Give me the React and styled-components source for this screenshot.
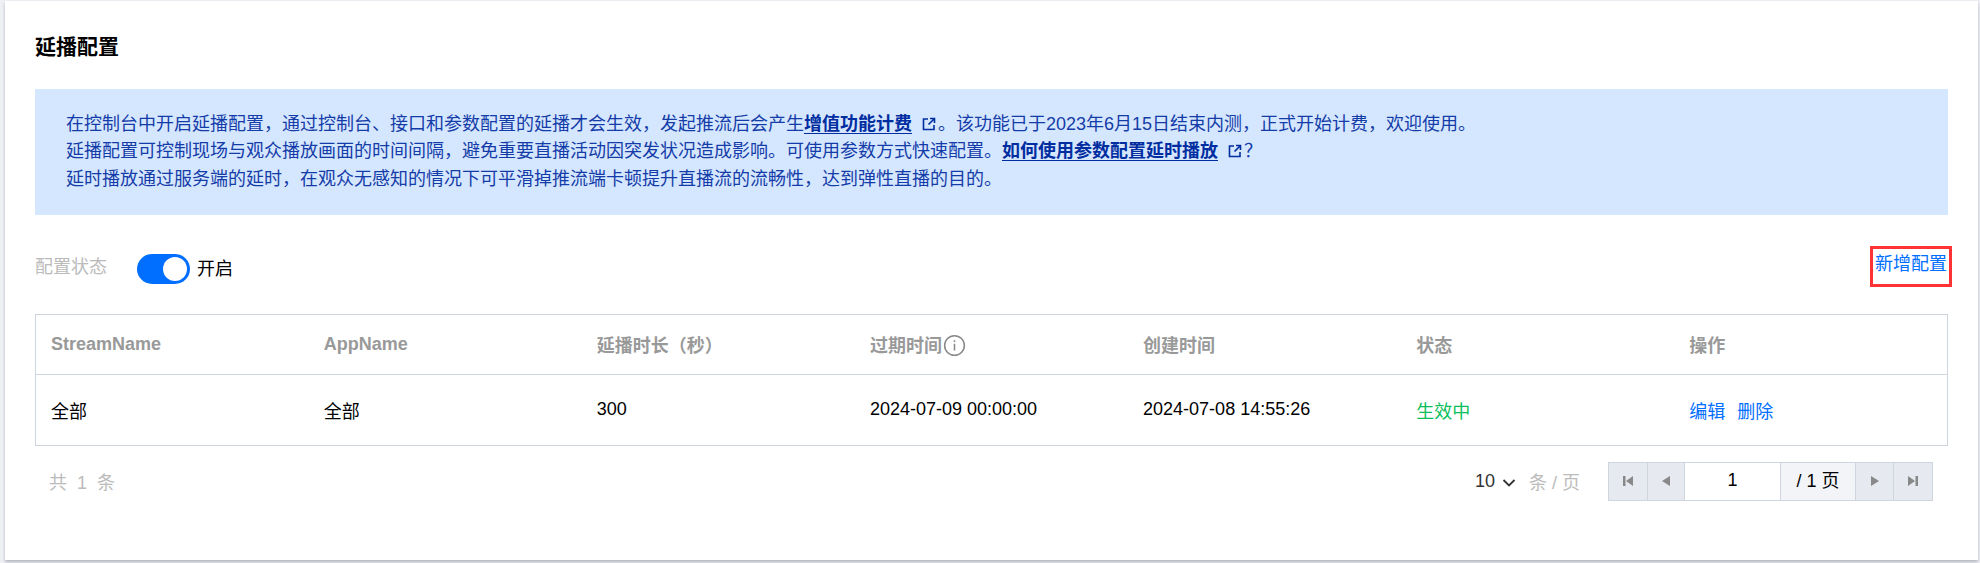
import styled, { createGlobalStyle } from "styled-components";

const GlobalStyle = createGlobalStyle`
  html, body {
    margin: 0;
    padding: 0;
    background: #eef0f5;
  }
  body {
    font-family: "Liberation Sans", "Noto Sans CJK SC", sans-serif;
    font-size: 18px;
    color: #000;
  }
`;

const Page = styled.div`
  padding: 1px 2px 3px 5px;
  height: 563px;
  box-sizing: border-box;
`;

const Card = styled.section`
  height: 559px;
  box-sizing: border-box;
  background: #fff;
  box-shadow: 0 2px 3px rgba(54, 58, 80, 0.32);
  padding: 31px 30px 0 30px;
`;

const Title = styled.h2`
  margin: 0 0 27px;
  font-size: 21px;
  line-height: 30px;
  font-weight: 700;
  color: #000;
`;

const Alert = styled.div`
  background: #d5e7ff;
  color: #143ca8;
  padding: 22px 31px 22px;
  line-height: 27.3px;
`;

const AlertLink = styled.a`
  color: #002da0;
  font-weight: 700;
  text-decoration: underline;
  text-underline-offset: 3px;
`;

const OutIcon = styled.svg`
  width: 14px;
  height: 14px;
  margin: 0 2px 0 10px;
  vertical-align: -1px;
`;

const Toolbar = styled.div`
  display: flex;
  justify-content: space-between;
  align-items: flex-start;
  margin: 31px -4px 27px 0;
  height: 41px;
`;

const StatusGroup = styled.div`
  display: flex;
  align-items: center;
  margin-top: 8px;
`;

const StatusLabel = styled.span`
  color: #bbb;
  width: 102px;
  margin-top: -7px;
`;

const Toggle = styled.span`
  position: relative;
  width: 53px;
  height: 30px;
  border-radius: 15px;
  background: #006eff;
  margin-right: 7px;

  &::after {
    content: "";
    position: absolute;
    top: 3px;
    right: 3px;
    width: 24px;
    height: 24px;
    border-radius: 50%;
    background: #fff;
  }
`;

const ToggleText = styled.span`
  margin-top: -3px;
`;

const AddButton = styled.a`
  box-sizing: border-box;
  width: 82px;
  height: 41px;
  border: 3px solid #ff3333;
  color: #006eff;
  text-align: center;
  line-height: 31px;
`;

const Table = styled.table`
  width: 100%;
  table-layout: fixed;
  border-collapse: collapse;
  border: 1px solid #cfd5de;
`;

const HeadCell = styled.th`
  height: 59px;
  padding: 0 15px;
  text-align: left;
  font-weight: 700;
  color: #999;
  border-bottom: 1px solid #cfd5de;
`;

const Cell = styled.td`
  height: 70px;
  padding: 0 15px;
  color: ${(p) => p.$color || "#000"};
`;

const RowAction = styled.a`
  color: #006eff;
  margin-right: 12px;
`;

const InfoIcon = styled.svg`
  width: 23px;
  height: 23px;
  margin-left: 1px;
  vertical-align: -5px;
`;

const Footer = styled.div`
  display: flex;
  justify-content: space-between;
  align-items: center;
  margin-top: 16px;
  padding: 0 15px 0 14px;
  height: 39px;
`;

const Total = styled.span`
  color: #bbb;
  word-spacing: 5px;
`;

const Pager = styled.div`
  display: flex;
  align-items: center;
`;

const PageSize = styled.span`
  color: #333;
  display: flex;
  align-items: center;
`;

const Chevron = styled.svg`
  width: 14px;
  height: 10px;
  margin: 3px 13px 0 7px;
`;

const PerPage = styled.span`
  color: #bbb;
  margin-right: 28px;
`;

const PagerGroup = styled.div`
  display: flex;
  height: 39px;
  box-sizing: border-box;
  border: 1px solid #cfd5de;
`;

const PagerButton = styled.span`
  display: flex;
  align-items: center;
  justify-content: center;
  width: ${(p) => p.$width}px;
  background: #e6e9ef;
  border-left: ${(p) => (p.$first ? "none" : "1px solid #cfd5de")};
  box-sizing: border-box;
`;

const PagerInput = styled.span`
  width: 96px;
  box-sizing: border-box;
  background: #fff;
  border-left: 1px solid #cfd5de;
  text-align: center;
  line-height: 35px;
  color: #000;
`;

const PagerTotal = styled.span`
  width: 75px;
  box-sizing: border-box;
  background: #f2f4f8;
  border-left: 1px solid #cfd5de;
  text-align: center;
  line-height: 37px;
  color: #000;
`;

const External = () => (
  <OutIcon viewBox="0 0 14 14" fill="none" stroke="#002da0" strokeWidth="1.6">
    <path d="M6 2H1.5v10.5H12V8" />
    <path d="M8 1.5h4.5V6M12.5 1.5L6.5 7.5" />
  </OutIcon>
);

const PagerIcon = ({ d }) => (
  <svg width="14" height="14" viewBox="0 0 14 14" fill="#888">
    <path d={d} />
  </svg>
);

const columns = ["StreamName", "AppName", "延播时长\uFF08秒\uFF09", "过期时间", "创建时间", "状态", "操作"];

export default function App() {
  return (
    <Page>
      <GlobalStyle />
      <Card>
        <Title>延播配置</Title>
        <Alert>
          在控制台中开启延播配置&#xFF0C;通过控制台、接口和参数配置的延播才会生效&#xFF0C;发起推流后会产生
          <AlertLink>增值功能计费</AlertLink>
          <External />
          。该功能已于2023年6月15日结束内测&#xFF0C;正式开始计费&#xFF0C;欢迎使用。
          <br />
          延播配置可控制现场与观众播放画面的时间间隔&#xFF0C;避免重要直播活动因突发状况造成影响。可使用参数方式快速配置。
          <AlertLink>如何使用参数配置延时播放</AlertLink>
          <External />&#xFF1F;
          <br />
          延时播放通过服务端的延时&#xFF0C;在观众无感知的情况下可平滑掉推流端卡顿提升直播流的流畅性&#xFF0C;达到弹性直播的目的。
        </Alert>

        <Toolbar>
          <StatusGroup>
            <StatusLabel>配置状态</StatusLabel>
            <Toggle />
            <ToggleText>开启</ToggleText>
          </StatusGroup>
          <AddButton>新增配置</AddButton>
        </Toolbar>

        <Table>
          <thead>
            <tr>
              {columns.map((c) => (
                <HeadCell key={c}>
                  {c}
                  {c === "过期时间" && (
                    <InfoIcon viewBox="0 0 21 21" fill="none" stroke="#888" strokeWidth="1.4">
                      <circle cx="10.5" cy="10.5" r="9" />
                      <path d="M10.5 9v6M10.5 5.8v1.6" />
                    </InfoIcon>
                  )}
                </HeadCell>
              ))}
            </tr>
          </thead>
          <tbody>
            <tr>
              <Cell>全部</Cell>
              <Cell>全部</Cell>
              <Cell>300</Cell>
              <Cell>2024-07-09 00:00:00</Cell>
              <Cell>2024-07-08 14:55:26</Cell>
              <Cell $color="#0abf5b">生效中</Cell>
              <Cell>
                <RowAction>编辑</RowAction>
                <RowAction>删除</RowAction>
              </Cell>
            </tr>
          </tbody>
        </Table>

        <Footer>
          <Total>共 1 条</Total>
          <Pager>
            <PageSize>
              10
              <Chevron viewBox="0 0 14 10" fill="none" stroke="#333" strokeWidth="1.8">
                <path d="M1.5 2l5.5 5.5L12.5 2" />
              </Chevron>
            </PageSize>
            <PerPage>条 / 页</PerPage>
            <PagerGroup>
              <PagerButton $width={38} $first>
                <PagerIcon d="M2 2h2.5v10H2zM12 2v10L5 7z" />
              </PagerButton>
              <PagerButton $width={37}>
                <PagerIcon d="M11 2v10L3 7z" />
              </PagerButton>
              <PagerInput>1</PagerInput>
              <PagerTotal>/ 1 页</PagerTotal>
              <PagerButton $width={38}>
                <PagerIcon d="M3 2v10l8-5z" />
              </PagerButton>
              <PagerButton $width={39}>
                <PagerIcon d="M2 2v10l7-5zM9.5 2H12v10H9.5z" />
              </PagerButton>
            </PagerGroup>
          </Pager>
        </Footer>
      </Card>
    </Page>
  );
}
